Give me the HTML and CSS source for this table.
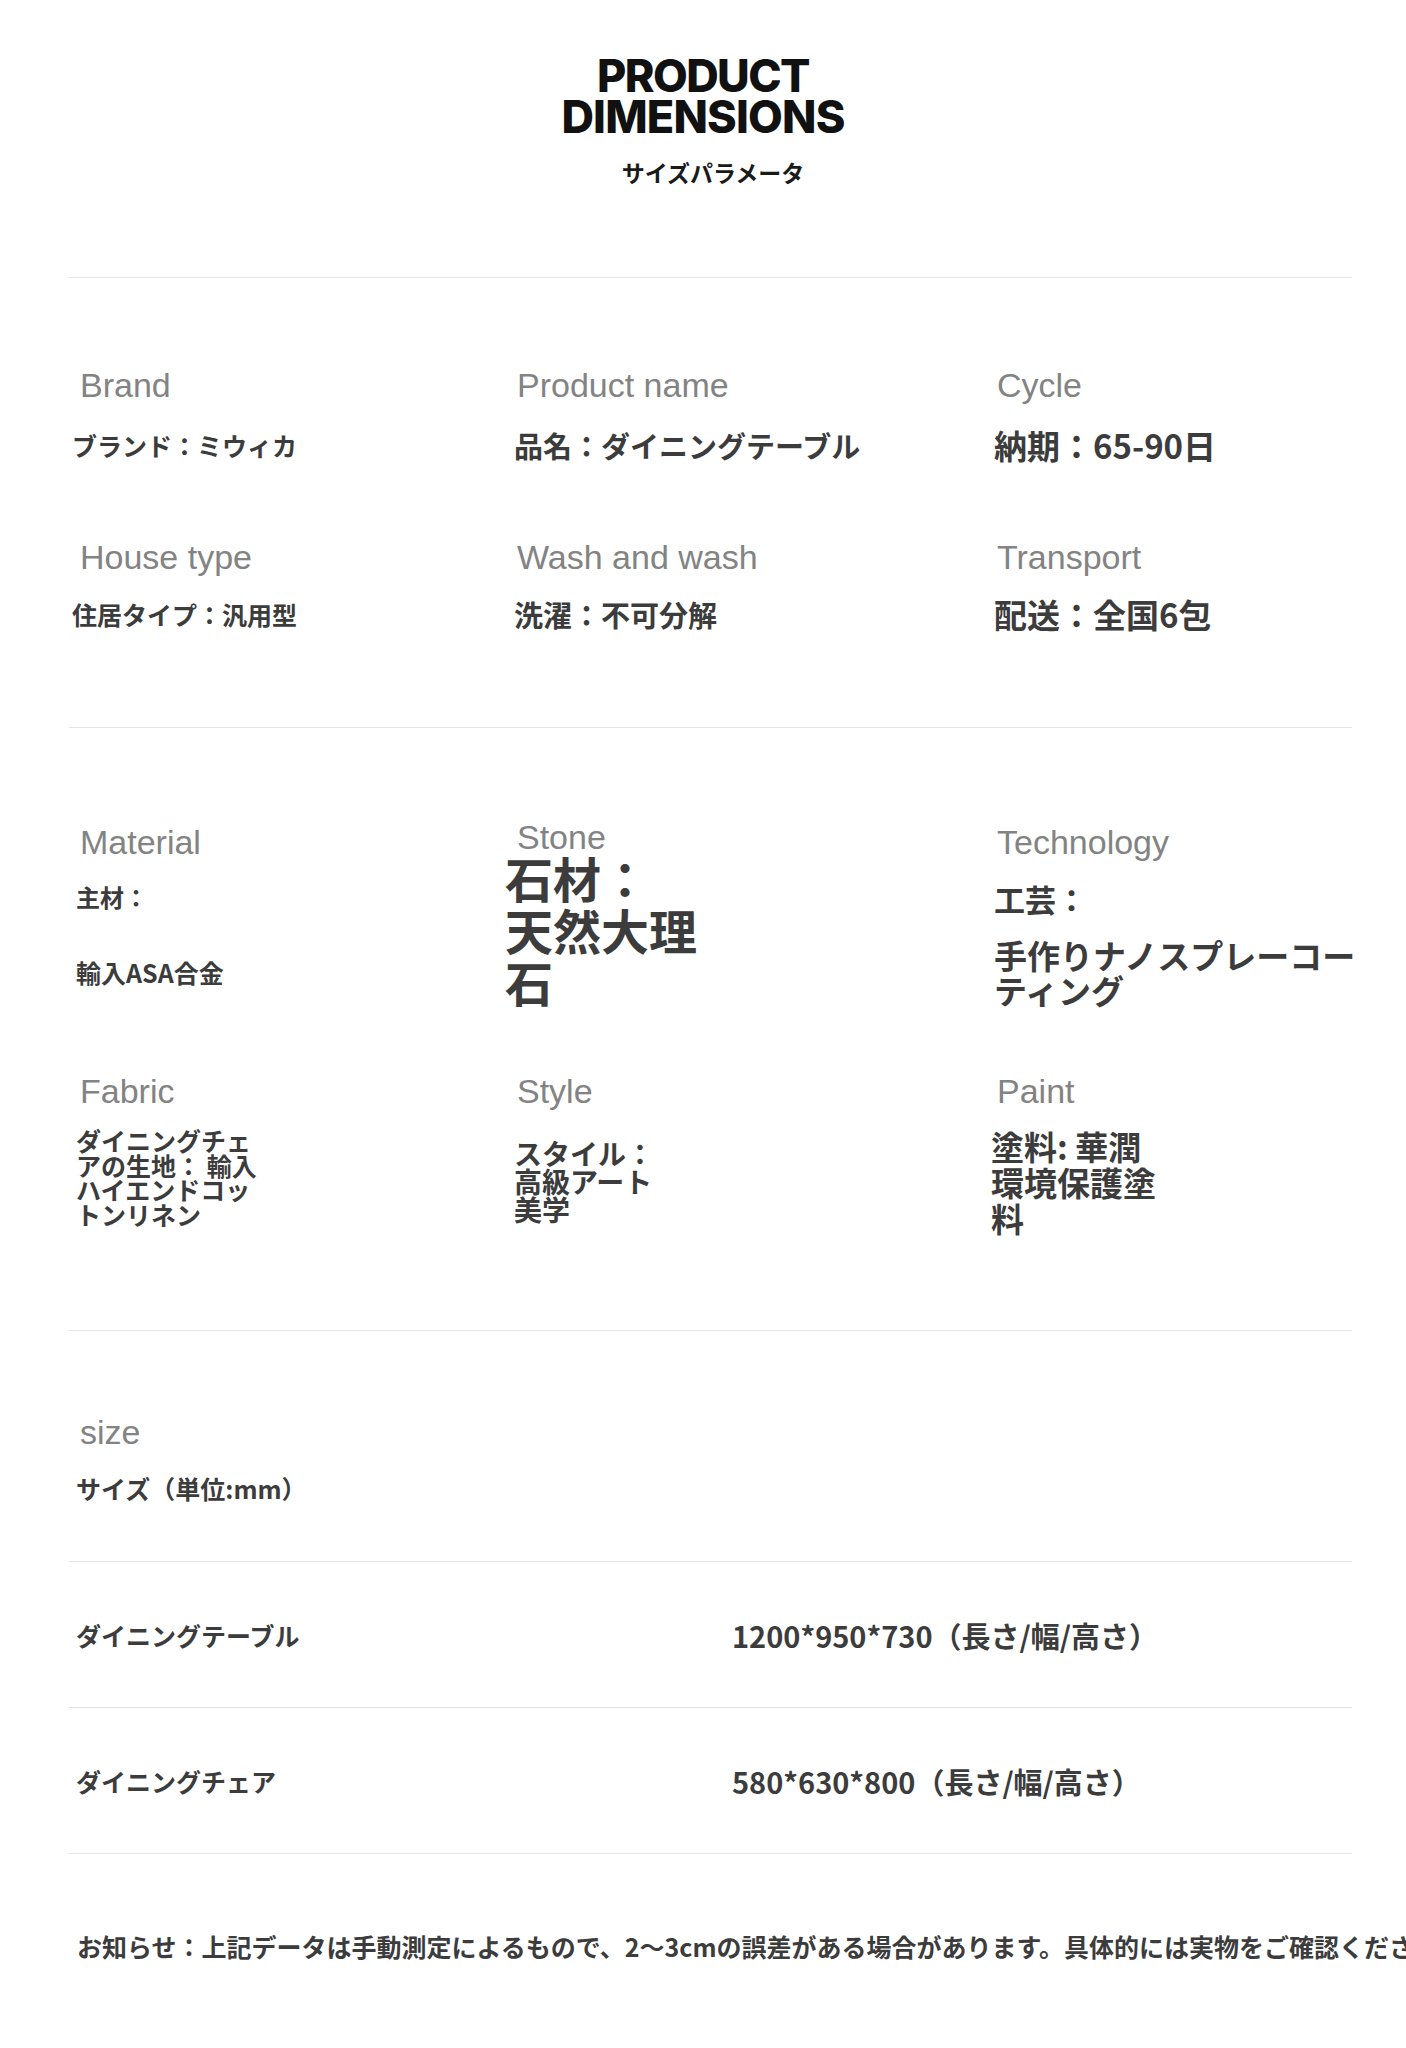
FILE: index.html
```html
<!DOCTYPE html>
<html lang="ja">
<head>
  <meta charset="UTF-8" />
  <meta name="viewport" content="width=device-width, initial-scale=1" />
  <title>Product Dimensions</title>
  <link rel="stylesheet" href="styles.css">
</head>
<body>
  <div id="header">
    <h1 class="title"><span class="title-line">PRODUCT</span><span class="title-line">DIMENSIONS</span></h1>
    <p class="subtitle">サイズパラメータ</p>
  </div>

  <div id="sheet">
    <!-- basic info -->
    <div class="spec-grid basic">
      <div class="cell">
        <div class="label">Brand</div>
        <div class="val v25">ブランド：ミウィカ</div>
      </div>
      <div class="cell">
        <div class="label">Product name</div>
        <div class="val v29">品名：ダイニングテーブル</div>
      </div>
      <div class="cell">
        <div class="label">Cycle</div>
        <div class="val v33">納期：65-90日</div>
      </div>
      <div class="cell">
        <div class="label">House type</div>
        <div class="val v25">住居タイプ：汎用型</div>
      </div>
      <div class="cell">
        <div class="label">Wash and wash</div>
        <div class="val v29">洗濯：不可分解</div>
      </div>
      <div class="cell">
        <div class="label">Transport</div>
        <div class="val v33">配送：全国6包</div>
      </div>
    </div>

    <!-- materials -->
    <div class="spec-grid materials">
      <div class="cell">
        <div class="label">Material</div>
        <div class="mat-head">主材：</div>
        <div class="mat-body">輸入ASA合金</div>
      </div>
      <div class="cell">
        <div class="label stone-label">Stone</div>
        <div class="stone">石材：<br>天然大理石</div>
      </div>
      <div class="cell">
        <div class="label">Technology</div>
        <div class="tech-head">工芸：</div>
        <div class="tech-body">手作りナノスプレーコーティング</div>
      </div>
      <div class="cell">
        <div class="label">Fabric</div>
        <div class="fabric">ダイニングチェアの生地： 輸入ハイエンドコットンリネン</div>
      </div>
      <div class="cell">
        <div class="label">Style</div>
        <div class="style">スタイル：高級アート美学</div>
      </div>
      <div class="cell">
        <div class="label">Paint</div>
        <div class="paint">塗料: 華潤環境保護塗料</div>
      </div>
    </div>

    <!-- size -->
    <div class="size-block">
      <div class="label">size</div>
      <div class="size-val">サイズ（単位:mm）</div>
    </div>

    <div class="dim-table">
      <div class="dim-row">
        <div class="dim-name">ダイニングテーブル</div>
        <div class="dim-value">1200*950*730（長さ/幅/高さ）</div>
      </div>
      <div class="dim-row">
        <div class="dim-name">ダイニングチェア</div>
        <div class="dim-value">580*630*800（長さ/幅/高さ）</div>
      </div>
    </div>
  </div>

  <p class="note">お知らせ：上記データは手動測定によるもので、2〜3cmの誤差がある場合があります。具体的には実物をご確認ください。</p>
</body>
</html>
```

FILE: styles.css
```css
html, body {
  margin: 0;
  padding: 0;
  background: #ffffff;
  overflow-x: hidden;
  font-family: "Noto Sans CJK JP", "Noto Sans", sans-serif;
  color: #3c3c3c;
}
#header {
  text-align: center;
  padding-top: 55px;
}
.title {
  margin: 0;
  font-family: Inter, "Liberation Sans", sans-serif;
  font-weight: 800;
  font-size: 45px;
  line-height: 41px;
  letter-spacing: -0.8px;
  color: #111111;
}
.title-line {
  display: block;
}
.title-line:first-child {
  letter-spacing: -1.6px;
}
.subtitle {
  margin: 22px 0 0;
  padding-left: 20px;
  font-size: 23px;
  line-height: 26px;
  font-weight: 700;
  color: #1a1a1a;
}
#sheet {
  width: 1283px;
  margin: 92px 0 0 69px;
}
.spec-grid {
  display: grid;
  grid-template-columns: 442px 480px 1fr;
  align-items: start;
  padding-left: 3px;
  border-top: 1px solid #e4e4e4;
}
.basic {
  padding-top: 88px;
  padding-bottom: 94px;
  row-gap: 74px;
}
.materials {
  padding-top: 95px;
  padding-bottom: 94px;
  row-gap: 64px;
}
.label {
  font-family: "Liberation Sans", Arial, sans-serif;
  font-size: 34px;
  line-height: 38px;
  color: #838383;
  padding-left: 3px;
}
.cell:nth-child(3n+1) .label,
.size-block .label {
  padding-left: 8px;
}
.val {
  margin-top: 22px;
  line-height: 38px;
  font-weight: 700;
}
.cell:nth-child(n+4) .val {
  margin-top: 19px;
}
.v25 { font-size: 25px; }
.v29 { font-size: 29px; }
.v33 { font-size: 33px; }

.mat-head {
  margin-top: 22px;
  padding-left: 4px;
  font-size: 24px;
  line-height: 28px;
  font-weight: 700;
}
.mat-body {
  margin-top: 47px;
  padding-left: 4px;
  font-size: 25px;
  line-height: 28px;
  font-weight: 700;
}
.stone-label {
  margin-top: -5px;
}
.stone {
  margin: -5px 0 0 -9px;
  width: 205px;
  font-size: 48px;
  line-height: 52px;
  font-weight: 700;
}
.tech-head {
  margin-top: 21px;
  font-size: 31px;
  line-height: 34px;
  font-weight: 700;
}
.tech-body {
  margin-top: 22px;
  width: 372px;
  font-size: 33px;
  line-height: 35px;
  font-weight: 700;
}
.fabric {
  margin-top: 18px;
  padding-left: 4px;
  width: 185px;
  font-size: 25px;
  line-height: 24.5px;
  font-weight: 700;
}
.style {
  margin-top: 29px;
  width: 150px;
  font-size: 28px;
  line-height: 28px;
  font-weight: 700;
}
.paint {
  margin: 18px 0 0 -3px;
  width: 178px;
  font-size: 33px;
  line-height: 36px;
  font-weight: 700;
}
.size-block {
  border-top: 1px solid #e4e4e4;
  padding: 82px 0 59px 3px;
}
.size-val {
  margin-top: 23px;
  padding-left: 4px;
  font-size: 25px;
  line-height: 28px;
  font-weight: 700;
}
.dim-table {
  border-bottom: 1px solid #e4e4e4;
}
.dim-row {
  display: grid;
  grid-template-columns: 656px 1fr;
  align-items: center;
  height: 146px;
  box-sizing: border-box;
  border-top: 1px solid #e4e4e4;
  padding-left: 7px;
  font-weight: 700;
}
.dim-name {
  font-size: 25px;
}
.dim-value {
  font-size: 29px;
}
.note {
  margin: 77px 0 0;
  padding-left: 77px;
  white-space: nowrap;
  overflow: hidden;
  font-size: 25px;
  line-height: 30px;
  font-weight: 700;
}
```
